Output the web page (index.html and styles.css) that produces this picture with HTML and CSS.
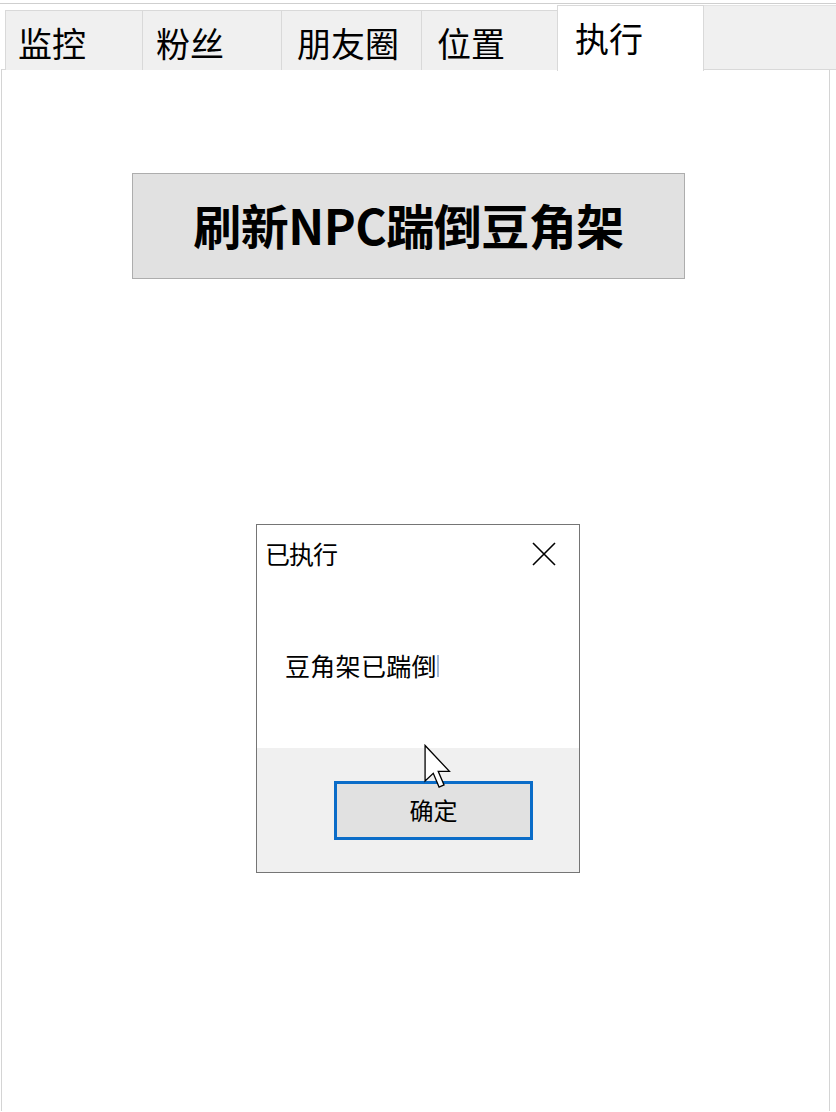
FILE: index.html
```html
<!DOCTYPE html>
<html lang="zh-CN">
<head>
<meta charset="utf-8">
<title>执行</title>
<link rel="stylesheet" href="styles.css">
</head>
<body>
<div class="topline"></div>
<div class="tabbar">
  <div class="tab t1">监控</div>
  <div class="tab t2">粉丝</div>
  <div class="tab t3">朋友圈</div>
  <div class="tab t4">位置</div>
  <div class="tab sel">执行</div>
  <div class="filler"></div>
</div>
<div class="panel">
  <button class="bigbtn">刷新NPC踹倒豆角架</button>
</div>

<div class="dialog">
  <div class="dlg-head">
    <span class="dlg-title">已执行</span>
    <svg class="dlg-close" width="24" height="24" viewBox="0 0 24 24"><path d="M1 1 L23 23 M23 1 L1 23" stroke="#000" stroke-width="1.6" fill="none"/></svg>
  </div>
  <div class="dlg-body"><span class="msg">豆角架已踹倒</span><span class="caret"></span></div>
  <div class="dlg-foot">
    <button class="okbtn">确定</button>
  </div>
</div>

<svg class="cursor" width="28" height="50" viewBox="0 0 13 21"><path d="M0.5 0.5 V17 L4.3 13.4 L7 19.8 L9.3 18.8 L6.6 12.5 H11.8 Z" fill="#fff" stroke="#000" stroke-width="0.6" stroke-linejoin="miter"/></svg>
</body>
</html>
```

FILE: styles.css
```css
html, body {
  margin: 0;
  padding: 0;
  background: #ffffff;
  width: 836px;
  height: 1112px;
  overflow: hidden;
  font-family: "Noto Sans CJK SC", "Liberation Sans", sans-serif;
  color: #000;
}

body {
  padding-top: 3px;
  box-sizing: border-box;
  position: relative;
}

.topline {
  height: 1px;
  background: #cfcfcf;
}

.tabbar {
  display: flex;
  align-items: flex-end;
  height: 66px;
  padding-left: 5px;
  position: relative;
  z-index: 2;
}

.tab {
  box-sizing: border-box;
  height: 60px;
  background: #f0f0f0;
  border: 1px solid #d9d9d9;
  border-bottom: none;
  margin-left: -1px;
  font-size: 34px;
  line-height: 1;
  display: flex;
  align-items: center;
  padding: 4px 0 0 0;
  white-space: nowrap;
}

.tab:first-child { margin-left: 0; }

.t1 { width: 138px; padding-left: 12px; }
.t2 { width: 140px; padding-left: 13px; }
.t3 { width: 141px; padding-left: 15px; }
.t4 { width: 137px; padding-left: 15px; }

.sel {
  width: 147px;
  height: 66px;
  background: #ffffff;
  padding: 0 0 2px 17px;
  margin-bottom: -1px;
  position: relative;
  z-index: 3;
}

.filler {
  flex: 1;
  height: 65px;
  box-sizing: border-box;
  background: #f0f0f0;
  border-top: 1px solid #e2e2e2;
  border-bottom: 1px solid #d9d9d9;
  margin-left: -1px;
  border-left: 1px solid #d9d9d9;
}

.panel {
  box-sizing: border-box;
  margin-left: 1px;
  width: 829px;
  height: 1042px;
  border-left: 1px solid #d4d4d4;
  border-right: 1px solid #d4d4d4;
  border-top: 1px solid #d9d9d9;
  margin-top: -1px;
  padding-top: 103px;
  padding-left: 130px;
  background: #fff;
}

.bigbtn {
  display: block;
  box-sizing: border-box;
  width: 553px;
  height: 106px;
  margin: 0;
  background: #e1e1e1;
  border: 1px solid #adadad;
  font-family: "Noto Sans CJK SC", "Liberation Sans", sans-serif;
  font-size: 48px;
  font-weight: 700;
  color: #000;
  padding: 0 0 4px 0;
  letter-spacing: -0.5px;
}

.dialog {
  position: absolute;
  left: 256px;
  top: 524px;
  width: 324px;
  height: 349px;
  box-sizing: border-box;
  border: 1px solid #757575;
  background: #fff;
  display: flex;
  flex-direction: column;
  z-index: 5;
}

.dlg-head {
  display: flex;
  justify-content: space-between;
  align-items: center;
  padding: 8px 23px 0 8px;
  height: 40px;
}

.dlg-title {
  font-size: 25px;
  line-height: 1;
  letter-spacing: -1px;
}

.dlg-close {
  display: block;
  margin-top: 1px;
}

.dlg-body {
  flex: 1;
  display: flex;
  align-items: flex-start;
  padding: 80px 0 0 28px;
}

.msg {
  font-size: 25px;
  line-height: 1;
  letter-spacing: 0.3px;
}

.caret {
  width: 2px;
  height: 22px;
  margin-top: 2px;
  background: #9fb8d8;
}

.dlg-foot {
  height: 124px;
  background: #f0f0f0;
  box-sizing: border-box;
  padding: 33px 0 0 77px;
}

.okbtn {
  display: block;
  box-sizing: border-box;
  width: 199px;
  height: 59px;
  margin: 0;
  background: #e1e1e1;
  border: 3px solid #0a6cc8;
  font-family: "Noto Sans CJK SC", "Liberation Sans", sans-serif;
  font-size: 24px;
  color: #000;
  padding: 0 0 2px 0;
}

.cursor {
  position: absolute;
  left: 424px;
  top: 742px;
  z-index: 10;
}
```
